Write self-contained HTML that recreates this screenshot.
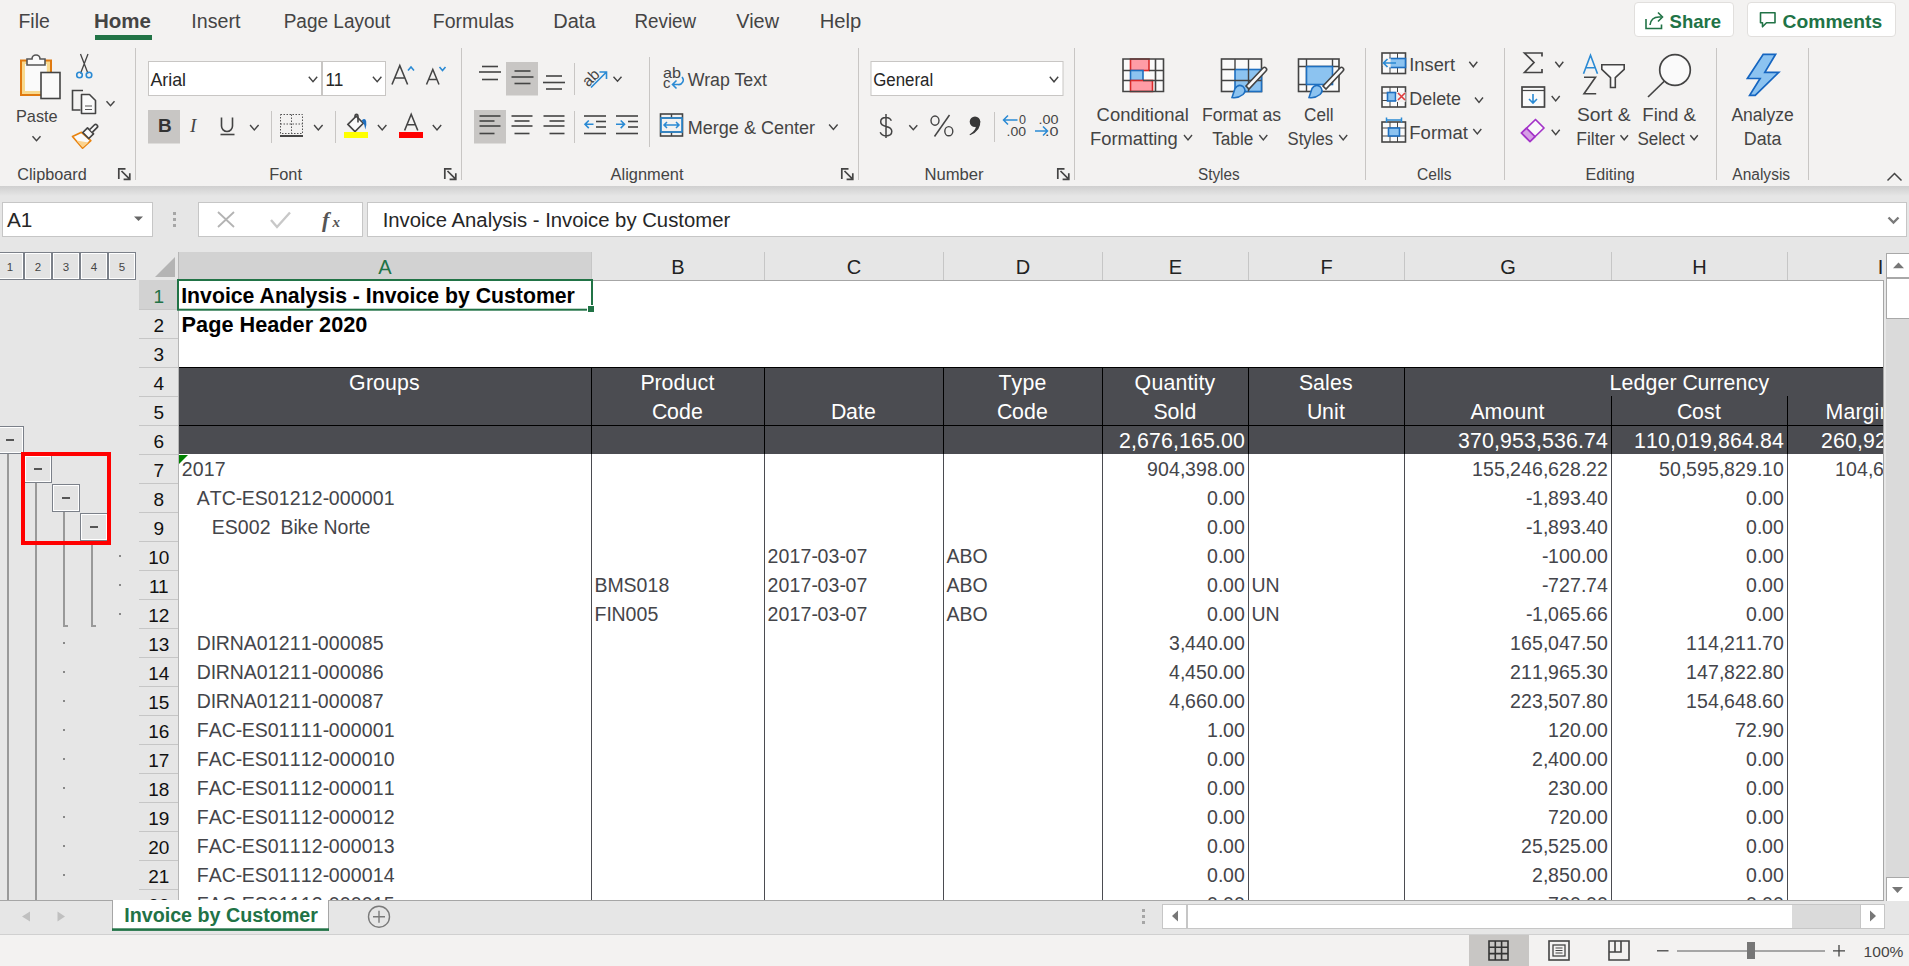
<!DOCTYPE html>
<html><head><meta charset="utf-8"><title>Excel - Invoice by Customer</title>
<style>
html,body{margin:0;padding:0;}
body{width:1909px;height:966px;overflow:hidden;position:relative;background:#e6e6e6;font-family:"Liberation Sans",sans-serif;}
.abs{position:absolute;}
svg{position:absolute;left:0;top:0;overflow:visible;}
svg text{font-family:"Liberation Sans",sans-serif;}
</style></head><body>
<div class="abs" style="left:0;top:0;width:1909px;height:186px;background:#f3f2f1"></div><div class="abs" style="left:0;top:186px;width:1909px;height:10px;background:linear-gradient(#cfcfcf,#e6e6e6)"></div><div class="abs" style="left:1634px;top:2px;width:98px;height:33px;background:#fff;border:1px solid #e1dfdd;border-radius:4px"></div><div class="abs" style="left:1747px;top:2px;width:147px;height:33px;background:#fff;border:1px solid #e1dfdd;border-radius:4px"></div><svg width="1909" height="196" viewBox="0 0 1909 196"><rect x="148.5" y="61.5" width="173" height="34" fill="#fff" stroke="#c8c6c4"/><rect x="322.5" y="61.5" width="63" height="34" fill="#fff" stroke="#c8c6c4"/><rect x="871" y="61.5" width="192" height="34" fill="#fff" stroke="#c8c6c4"/><text x="18.5" y="28" font-size="19.5" fill="#444" font-weight="normal" textLength="31.3" lengthAdjust="spacingAndGlyphs" >File</text><text x="94.0" y="28" font-size="19.5" fill="#444" font-weight="bold" textLength="57.0" lengthAdjust="spacingAndGlyphs" >Home</text><text x="191.3" y="28" font-size="19.5" fill="#444" font-weight="normal" textLength="49.1" lengthAdjust="spacingAndGlyphs" >Insert</text><text x="283.7" y="28" font-size="19.5" fill="#444" font-weight="normal" textLength="106.7" lengthAdjust="spacingAndGlyphs" >Page Layout</text><text x="432.8" y="28" font-size="19.5" fill="#444" font-weight="normal" textLength="81.2" lengthAdjust="spacingAndGlyphs" >Formulas</text><text x="553.3" y="28" font-size="19.5" fill="#444" font-weight="normal" textLength="42.2" lengthAdjust="spacingAndGlyphs" >Data</text><text x="634.5" y="28" font-size="19.5" fill="#444" font-weight="normal" textLength="61.6" lengthAdjust="spacingAndGlyphs" >Review</text><text x="736.3" y="28" font-size="19.5" fill="#444" font-weight="normal" textLength="42.7" lengthAdjust="spacingAndGlyphs" >View</text><text x="819.8" y="28" font-size="19.5" fill="#444" font-weight="normal" textLength="41.5" lengthAdjust="spacingAndGlyphs" >Help</text><rect x="95" y="35" width="57" height="5" fill="#217346"/><text x="1669.6" y="28" font-size="19" fill="#217346" font-weight="bold" textLength="51.4" lengthAdjust="spacingAndGlyphs" >Share</text><text x="1782.6" y="28" font-size="19" fill="#217346" font-weight="bold" textLength="99.5" lengthAdjust="spacingAndGlyphs" >Comments</text><path d="M1646 19 v9.5 h15.5 v-4" fill="none" stroke="#217346" stroke-width="1.6"/><path d="M1650 25 q1-8 9-8 h2.5" fill="none" stroke="#217346" stroke-width="1.6"/><path d="M1658 12.5 l4.5 4.5 -4.5 4.5" fill="none" stroke="#217346" stroke-width="1.6"/><path d="M1760.5 12.8 h14.5 v10 h-8.5 l-4 4 v-4 h-2 z" fill="none" stroke="#217346" stroke-width="1.6" stroke-linejoin="round"/><line x1="135.5" y1="48" x2="135.5" y2="180" stroke="#c8c6c4" stroke-width="1"/><line x1="461.5" y1="48" x2="461.5" y2="180" stroke="#c8c6c4" stroke-width="1"/><line x1="858.5" y1="48" x2="858.5" y2="180" stroke="#c8c6c4" stroke-width="1"/><line x1="1074.5" y1="48" x2="1074.5" y2="180" stroke="#c8c6c4" stroke-width="1"/><line x1="1365.5" y1="48" x2="1365.5" y2="180" stroke="#c8c6c4" stroke-width="1"/><line x1="1504.5" y1="48" x2="1504.5" y2="180" stroke="#c8c6c4" stroke-width="1"/><line x1="1716.5" y1="48" x2="1716.5" y2="180" stroke="#c8c6c4" stroke-width="1"/><line x1="1808.5" y1="48" x2="1808.5" y2="180" stroke="#c8c6c4" stroke-width="1"/><text x="17.3" y="179.5" font-size="16" fill="#444" font-weight="normal" textLength="69.4" lengthAdjust="spacingAndGlyphs" >Clipboard</text><text x="269.3" y="179.5" font-size="16" fill="#444" font-weight="normal" textLength="32.7" lengthAdjust="spacingAndGlyphs" >Font</text><text x="610.6" y="179.5" font-size="16" fill="#444" font-weight="normal" textLength="72.9" lengthAdjust="spacingAndGlyphs" >Alignment</text><text x="924.4" y="179.5" font-size="16" fill="#444" font-weight="normal" textLength="59.2" lengthAdjust="spacingAndGlyphs" >Number</text><text x="1198.0" y="179.5" font-size="16" fill="#444" font-weight="normal" textLength="41.6" lengthAdjust="spacingAndGlyphs" >Styles</text><text x="1417.0" y="179.5" font-size="16" fill="#444" font-weight="normal" textLength="34.6" lengthAdjust="spacingAndGlyphs" >Cells</text><text x="1585.6" y="179.5" font-size="16" fill="#444" font-weight="normal" textLength="49.2" lengthAdjust="spacingAndGlyphs" >Editing</text><text x="1732.3" y="179.5" font-size="16" fill="#444" font-weight="normal" textLength="57.8" lengthAdjust="spacingAndGlyphs" >Analysis</text><path d="M125.5 168.8 h-6.7 v10.2" fill="none" stroke="#444" stroke-width="1.7"/><path d="M121.5 171 l8.2 8.2 M129.8 173.2 v6.2 h-6.2" fill="none" stroke="#444" stroke-width="1.7"/><path d="M451.5 168.8 h-6.7 v10.2" fill="none" stroke="#444" stroke-width="1.7"/><path d="M447.5 171 l8.2 8.2 M455.8 173.2 v6.2 h-6.2" fill="none" stroke="#444" stroke-width="1.7"/><path d="M848.5 168.8 h-6.7 v10.2" fill="none" stroke="#444" stroke-width="1.7"/><path d="M844.5 171 l8.2 8.2 M852.8 173.2 v6.2 h-6.2" fill="none" stroke="#444" stroke-width="1.7"/><path d="M1064.5 168.8 h-6.7 v10.2" fill="none" stroke="#444" stroke-width="1.7"/><path d="M1060.5 171 l8.2 8.2 M1068.8 173.2 v6.2 h-6.2" fill="none" stroke="#444" stroke-width="1.7"/><path d="M1887.5 180.5 l7 -7 l7 7" fill="none" stroke="#444" stroke-width="1.5"/><rect x="21" y="60.5" width="30" height="34.5" fill="#f8d98e" stroke="#e07a10" stroke-width="2"/><rect x="25" y="64" width="21.8" height="27" fill="#fafafa"/><path d="M27 65 v-6 h5 a4 4 0 0 1 8 0 h5 v6 z" fill="#fafafa" stroke="#555" stroke-width="1.6"/><rect x="41" y="72.5" width="19" height="26" fill="#fafafa" stroke="#444" stroke-width="1.6"/><text x="16.0" y="121.5" font-size="17" fill="#444444" font-weight="normal" textLength="41.7" lengthAdjust="spacingAndGlyphs" >Paste</text><path d="M32.5 136.2 L36.5 140.8 L40.5 136.2" fill="none" stroke="#444" stroke-width="1.4"/><path d="M80.5 54 L88 73.5 M88 54 L80.5 73.5" stroke="#444" stroke-width="1.3"/><circle cx="79.5" cy="75" r="2.8" fill="none" stroke="#2a8ad4" stroke-width="1.6"/><circle cx="89" cy="75" r="2.8" fill="none" stroke="#2a8ad4" stroke-width="1.6"/><path d="M83 90.5 h-10.5 v19.5 h8" fill="none" stroke="#444" stroke-width="1.6"/><path d="M81.5 94.5 h8 l6 6 v13 h-14 z" fill="#fafafa" stroke="#444" stroke-width="1.6" stroke-linejoin="round"/><path d="M85 106 h7 M85 109.5 h7" stroke="#555" stroke-width="1.2"/><path d="M106.5 101.2 L110.5 105.8 L114.5 101.2" fill="none" stroke="#444" stroke-width="1.4"/><path d="M72.5 136.5 L81.5 132.3 L90.8 140.6 L82.6 148.2 Z" fill="#fafafa" stroke="#e8830f" stroke-width="1.7" stroke-linejoin="round"/><path d="M76.5 140.5 L82.6 147.5 L88.5 142.5 Z" fill="#fbd38f"/><path d="M82.8 132.5 L87.5 127.8 L93.5 133.8 L88.8 138.5 Z" fill="#fafafa" stroke="#444" stroke-width="1.7" stroke-linejoin="round"/><path d="M89.8 129.5 L94.3 125 a1.9 1.9 0 0 1 2.7 2.7 L92.5 132.2" fill="#fafafa" stroke="#444" stroke-width="1.7"/><path d="M308.8 76.7 L313.0 81.7 L317.2 76.7" fill="none" stroke="#444" stroke-width="1.4"/><path d="M372.9 76.7 L377.2 81.7 L381.4 76.7" fill="none" stroke="#444" stroke-width="1.4"/><text x="150.4" y="86" font-size="19" fill="#262626" font-weight="normal" textLength="35.6" lengthAdjust="spacingAndGlyphs" >Arial</text><text x="325.5" y="86" font-size="19" fill="#262626" font-weight="normal" textLength="17.9" lengthAdjust="spacingAndGlyphs" >11</text><path d="M392 84.5 L399.8 65.5 L407.6 84.5 M394.8 78 h10" fill="none" stroke="#444" stroke-width="1.6"/><path d="M408 70.5 l3 -3.5 l3 3.5" fill="none" stroke="#2a8ad4" stroke-width="1.6"/><path d="M426.5 84.5 L432.8 69.5 L439 84.5 M428.8 79.5 h8" fill="none" stroke="#444" stroke-width="1.5"/><path d="M439.5 67 l3 3.5 l3 -3.5" fill="none" stroke="#2a8ad4" stroke-width="1.6"/><rect x="148" y="110" width="32" height="33.5" fill="#c8c6c4"/><text x="158" y="131.5" font-size="19" font-weight="bold" fill="#333">B</text><text x="190" y="131.5" font-size="19" font-style="italic" fill="#444" style="font-family:Liberation Serif">I</text><path d="M221.5 117.5 v8.5 a5.5 5.5 0 0 0 11 0 v-8.5" fill="none" stroke="#444" stroke-width="1.6"/><path d="M220.5 134.5 h14" stroke="#444" stroke-width="1.6"/><path d="M250.1 125.0 L254.3 130.0 L258.6 125.0" fill="none" stroke="#444" stroke-width="1.4"/><line x1="271.5" y1="111" x2="271.5" y2="143" stroke="#c8c6c4"/><path d="M280.5 114.5 h22 v19 h-22 z M291.5 114.5 v19 M280.5 124 h22" fill="none" stroke="#555" stroke-width="1" stroke-dasharray="1.5 1.5"/><path d="M280 136 h23" stroke="#333" stroke-width="1.8"/><path d="M314.1 125.0 L318.3 130.0 L322.6 125.0" fill="none" stroke="#444" stroke-width="1.4"/><line x1="335.5" y1="111" x2="335.5" y2="143" stroke="#c8c6c4"/><path d="M347.9 124.4 L356.2 116.1 L363.3 123.2 L355 131.5 Z" fill="#fafafa" stroke="#444" stroke-width="1.6" stroke-linejoin="miter"/><path d="M355 117.6 V116.6 q0 -2.2 1.5 -2.2 q1.5 0 1.5 2.2 V122.6" fill="none" stroke="#444" stroke-width="1.6"/><path d="M361.8 120.2 q3.4 -2.6 4.4 1 q0.7 3.2 -0.9 8.3 q-0.4 -4.8 -3.5 -9.3 z" fill="#1e6fc0"/><rect x="344" y="132" width="24" height="6" fill="#ffff00"/><path d="M377.9 125.0 L382.2 130.0 L386.4 125.0" fill="none" stroke="#444" stroke-width="1.4"/><path d="M404.6 130.5 L411.2 114.3 L417.8 130.5 M406.9 124.8 h8.6" fill="none" stroke="#444" stroke-width="1.6"/><rect x="399" y="132" width="24" height="6" fill="#ff0000"/><path d="M432.8 125.0 L437.0 130.0 L441.2 125.0" fill="none" stroke="#444" stroke-width="1.4"/><rect x="506" y="62" width="32" height="33.5" fill="#c8c6c4"/><rect x="474" y="110" width="32" height="33.5" fill="#c8c6c4"/><path d="M482.0 66.5 h16" stroke="#444" stroke-width="1.6"/><path d="M479.0 72 h22" stroke="#444" stroke-width="1.6"/><path d="M482.0 79.5 h16" stroke="#444" stroke-width="1.6"/><path d="M514.5 71 h16" stroke="#444" stroke-width="1.6"/><path d="M511.5 77 h22" stroke="#444" stroke-width="1.6"/><path d="M514.5 83.5 h16" stroke="#444" stroke-width="1.6"/><path d="M546.0 76 h16" stroke="#444" stroke-width="1.6"/><path d="M543.0 82.5 h22" stroke="#444" stroke-width="1.6"/><path d="M546.0 89 h16" stroke="#444" stroke-width="1.6"/><path d="M479.5 116 h21" stroke="#444" stroke-width="1.6"/><path d="M479.5 121 h15" stroke="#444" stroke-width="1.6"/><path d="M479.5 126 h21" stroke="#444" stroke-width="1.6"/><path d="M479.5 133.5 h15" stroke="#444" stroke-width="1.6"/><path d="M511.5 116 h21" stroke="#444" stroke-width="1.6"/><path d="M514.5 121 h15" stroke="#444" stroke-width="1.6"/><path d="M511.5 126 h21" stroke="#444" stroke-width="1.6"/><path d="M514.5 133.5 h15" stroke="#444" stroke-width="1.6"/><path d="M543.5 116 h21" stroke="#444" stroke-width="1.6"/><path d="M549.5 121 h15" stroke="#444" stroke-width="1.6"/><path d="M543.5 126 h21" stroke="#444" stroke-width="1.6"/><path d="M549.5 133.5 h15" stroke="#444" stroke-width="1.6"/><line x1="574.5" y1="63" x2="574.5" y2="95" stroke="#c8c6c4"/><line x1="574.5" y1="111" x2="574.5" y2="143" stroke="#c8c6c4"/><line x1="649.5" y1="57" x2="649.5" y2="147" stroke="#c8c6c4"/><text x="581" y="84" font-size="15.5" fill="#444" transform="rotate(-45 589 77)">ab</text><path d="M591 87.5 L606 72.5 M599.5 72 h7 v7" fill="none" stroke="#2a8ad4" stroke-width="1.6"/><path d="M613.5 76.8 L617.5 81.2 L621.5 76.8" fill="none" stroke="#444" stroke-width="1.4"/><path d="M584.0 116 h22" stroke="#444" stroke-width="1.6"/><path d="M596.0 121.5 h10" stroke="#444" stroke-width="1.6"/><path d="M596.0 127 h10" stroke="#444" stroke-width="1.6"/><path d="M584.0 133.5 h22" stroke="#444" stroke-width="1.6"/><path d="M593.5 124.3 h-8.5 M588.8 120.5 l-3.8 3.8 l3.8 3.8" fill="none" stroke="#2a8ad4" stroke-width="1.6"/><path d="M616.0 116 h22" stroke="#444" stroke-width="1.6"/><path d="M628.0 121.5 h10" stroke="#444" stroke-width="1.6"/><path d="M628.0 127 h10" stroke="#444" stroke-width="1.6"/><path d="M616.0 133.5 h22" stroke="#444" stroke-width="1.6"/><path d="M616 124.3 h8.5 M620.7 120.5 l3.8 3.8 l-3.8 3.8" fill="none" stroke="#2a8ad4" stroke-width="1.6"/><text x="663" y="77.5" font-size="15" fill="#444" textLength="18" lengthAdjust="spacingAndGlyphs">ab</text><text x="663" y="88" font-size="15" fill="#444">c</text><path d="M673 84.5 h5 a4.5 4.5 0 0 0 4 -7.5 M676.5 80.5 l-4 4 l4 4" fill="none" stroke="#2a8ad4" stroke-width="1.6"/><text x="687.8" y="85.6" font-size="18" fill="#444444" font-weight="normal" textLength="79.2" lengthAdjust="spacingAndGlyphs" >Wrap Text</text><rect x="660.5" y="114" width="22" height="22" fill="none" stroke="#444" stroke-width="1.6"/><path d="M660.5 118 h22 M660.5 132 h22 M671.5 132 v4 M671.5 114 v4" stroke="#444" stroke-width="1.4"/><rect x="661" y="118" width="21" height="14" fill="none" stroke="#2a8ad4" stroke-width="1.6"/><path d="M664 125 h15 M667 122 l-3 3 l3 3 M676 122 l3 3 l-3 3" fill="none" stroke="#2a8ad4" stroke-width="1.5"/><text x="687.8" y="133.6" font-size="18" fill="#444444" font-weight="normal" textLength="127.2" lengthAdjust="spacingAndGlyphs" >Merge &amp; Center</text><path d="M829.1 124.5 L833.4 129.5 L837.6 124.5" fill="none" stroke="#444" stroke-width="1.4"/><text x="610.6" y="179.5" font-size="16" fill="#444444" font-weight="normal" textLength="72.9" lengthAdjust="spacingAndGlyphs" ></text><path d="M1049.8 76.8 L1054.0 81.8 L1058.2 76.8" fill="none" stroke="#444" stroke-width="1.4"/><text x="873.2" y="85.6" font-size="18" fill="#262626" font-weight="normal" textLength="60.0" lengthAdjust="spacingAndGlyphs" >General</text><path d="M891.3 120.8 q-1.2 -3.3 -5.3 -3.3 q-5.3 0 -5.3 4.3 q0 3.6 5.3 4.6 q5.8 1.1 5.8 4.9 q0 4.6 -5.8 4.6 q-4.3 0 -5.8 -3.6 M886 114 v24" fill="none" stroke="#444" stroke-width="1.5"/><path d="M909.3 125.2 L913.3 129.8 L917.3 125.2" fill="none" stroke="#444" stroke-width="1.4"/><ellipse cx="935" cy="120.6" rx="4" ry="4.6" fill="none" stroke="#444" stroke-width="1.4"/><ellipse cx="948.8" cy="131.2" rx="4" ry="4.6" fill="none" stroke="#444" stroke-width="1.4"/><path d="M949.5 115 L934.5 136.5" stroke="#444" stroke-width="1.5"/><circle cx="975" cy="121.8" r="5.3" fill="#383838"/><path d="M980.2 121 q1.2 9.5 -10.2 14.3 l-0.5 -0.8 q6.5 -4 6.5 -9 z" fill="#383838"/><line x1="994.5" y1="112" x2="994.5" y2="142" stroke="#c8c6c4"/><text x="1019" y="124.3" font-size="13" fill="#444" textLength="7" lengthAdjust="spacingAndGlyphs">0</text><text x="1006.5" y="136" font-size="13" fill="#444" textLength="19.5" lengthAdjust="spacingAndGlyphs">.00</text><path d="M1017.5 120 h-13 M1008 115.5 l-4.5 4.5 l4.5 4.5" fill="none" stroke="#2a8ad4" stroke-width="1.5"/><text x="1038.5" y="124.3" font-size="13" fill="#444" textLength="20" lengthAdjust="spacingAndGlyphs">.00</text><text x="1045" y="136" font-size="13" fill="#444" textLength="13.5" lengthAdjust="spacingAndGlyphs">.0</text><path d="M1035 131 h12.5 M1043 126.5 l4.5 4.5 l-4.5 4.5" fill="none" stroke="#2a8ad4" stroke-width="1.5"/><rect x="1123" y="59.5" width="40.5" height="31.5" fill="#fafafa"/><rect x="1130.5" y="59" width="18.5" height="11.5" fill="#ff9ca6" stroke="#d92b2b" stroke-width="1.6"/><rect x="1130.5" y="70.5" width="12.5" height="10" fill="#8cc3f0" stroke="#1e6fc0" stroke-width="1.6"/><rect x="1130.5" y="80.5" width="22" height="11" fill="#ff9ca6" stroke="#d92b2b" stroke-width="1.6"/><path d="M1123 59 h40.5 v32.5 h-40.5 z M1123 70.5 h7.5 M1149 70.5 h14.5 M1123 80.5 h7.5 M1143 80.5 h20.5 M1155.5 59 v32.5 M1149 59 v0" fill="none" stroke="#444" stroke-width="1.6"/><text x="1096.6" y="121.2" font-size="18" fill="#444444" font-weight="normal" textLength="92.2" lengthAdjust="spacingAndGlyphs" >Conditional</text><text x="1090.0" y="145.2" font-size="18" fill="#444444" font-weight="normal" textLength="87.8" lengthAdjust="spacingAndGlyphs" >Formatting</text><path d="M1184.0 135.0 L1188.0 140.0 L1192.0 135.0" fill="none" stroke="#444" stroke-width="1.4"/><rect x="1221.5" y="59" width="40" height="32.5" fill="#fafafa" stroke="#444" stroke-width="1.6"/><rect x="1235" y="69.5" width="26.5" height="22" fill="#8cc3f0" stroke="#1e6fc0" stroke-width="1.6"/><path d="M1221.5 69.5 h13.5 M1221.5 80.5 h13.5 M1235 59 v10.5 M1248.5 59 v10.5 M1235 80.5 h26.5 M1248.5 69.5 v22" fill="none" stroke="#444" stroke-width="1.4"/><path d="M1246 86 l17 -18 a2 2 0 0 1 3 3 l-17 18 z" fill="#fafafa" stroke="#444" stroke-width="1.6"/><path d="M1232 97.5 q6 1 11 -3 q4 -4 0 -8 q-5 -3 -8 2 q-2 6 -3 9 z" fill="#8cc3f0" stroke="#1e6fc0" stroke-width="1.6"/><text x="1201.9" y="121.2" font-size="18" fill="#444444" font-weight="normal" textLength="79.3" lengthAdjust="spacingAndGlyphs" >Format as</text><text x="1212.2" y="145.2" font-size="18" fill="#444444" font-weight="normal" textLength="41.1" lengthAdjust="spacingAndGlyphs" >Table</text><path d="M1259.3 135.0 L1263.3 140.0 L1267.3 135.0" fill="none" stroke="#444" stroke-width="1.4"/><rect x="1298.5" y="59" width="40.5" height="32.5" fill="#fafafa" stroke="#444" stroke-width="1.6"/><path d="M1298.5 66.5 h40.5 M1298.5 84.5 h8 M1306.5 59 v32.5 M1332.5 59 v8" fill="none" stroke="#444" stroke-width="1.4"/><rect x="1306.5" y="66.5" width="26" height="18" fill="#8cc3f0" stroke="#1e6fc0" stroke-width="1.6"/><path d="M1323 86 l17 -18 a2 2 0 0 1 3 3 l-17 18 z" fill="#fafafa" stroke="#444" stroke-width="1.6"/><path d="M1309 97.5 q6 1 11 -3 q4 -4 0 -8 q-5 -3 -8 2 q-2 6 -3 9 z" fill="#8cc3f0" stroke="#1e6fc0" stroke-width="1.6"/><text x="1304.1" y="121.2" font-size="18" fill="#444444" font-weight="normal" textLength="29.5" lengthAdjust="spacingAndGlyphs" >Cell</text><text x="1287.6" y="145.2" font-size="18" fill="#444444" font-weight="normal" textLength="45.4" lengthAdjust="spacingAndGlyphs" >Styles</text><path d="M1339.2 135.0 L1343.2 140.0 L1347.2 135.0" fill="none" stroke="#444" stroke-width="1.4"/><rect x="1382" y="53" width="23.5" height="20.5" fill="#fafafa" stroke="#444" stroke-width="1.6"/><path d="M1382 60 h23.5 M1382 66.5 h23.5 M1390 53 v20.5 M1397.5 53 v20.5" stroke="#444" stroke-width="1"/><rect x="1390" y="58.5" width="15.5" height="9" fill="#8cc3f0" stroke="#1e6fc0" stroke-width="1.6"/><rect x="1382.8" y="58.5" width="8" height="9" fill="#f3f2f1"/><path d="M1396 63 h-12.5 M1387.5 59 l-4 4 l4 4" fill="none" stroke="#2a8ad4" stroke-width="1.7"/><text x="1409.3" y="71.3" font-size="18" fill="#444444" font-weight="normal" textLength="45.7" lengthAdjust="spacingAndGlyphs" >Insert</text><path d="M1469.3 61.8 L1473.3 66.8 L1477.3 61.8" fill="none" stroke="#444" stroke-width="1.4"/><rect x="1382" y="87" width="23.5" height="20" fill="#fafafa" stroke="#444" stroke-width="1.6"/><path d="M1382 93 h23.5 M1382 100.5 h23.5 M1390 87 v20 M1397.5 87 v20" stroke="#444" stroke-width="1"/><rect x="1387.5" y="92.5" width="8" height="8.5" fill="#8cc3f0" stroke="#1e6fc0" stroke-width="1.6"/><rect x="1396.5" y="92" width="9" height="10" fill="#f3f2f1"/><path d="M1398 93 l7 7 M1405 93 l-7 7" stroke="#e03b3b" stroke-width="1.6"/><text x="1409.3" y="105" font-size="18" fill="#444444" font-weight="normal" textLength="51.7" lengthAdjust="spacingAndGlyphs" >Delete</text><path d="M1475.0 97.5 L1479.0 102.5 L1483.0 97.5" fill="none" stroke="#444" stroke-width="1.4"/><rect x="1382" y="122" width="23.5" height="20" fill="#fafafa" stroke="#444" stroke-width="1.6"/><path d="M1382 128 h23.5 M1382 136 h23.5 M1390 122 v20 M1397.5 122 v20" stroke="#444" stroke-width="1"/><rect x="1388.5" y="128" width="11" height="8" fill="#8cc3f0" stroke="#1e6fc0" stroke-width="1.6"/><path d="M1386.5 120 h15 M1386.5 117.5 v5 M1401.5 117.5 v5" stroke="#2a8ad4" stroke-width="1.5"/><text x="1409.3" y="139" font-size="18" fill="#444444" font-weight="normal" textLength="58.7" lengthAdjust="spacingAndGlyphs" >Format</text><path d="M1473.3 129.0 L1477.3 134.0 L1481.3 129.0" fill="none" stroke="#444" stroke-width="1.4"/><path d="M1542 56.5 v-3.5 h-17.5 l9.5 9.5 l-9.5 10 h17.5 v-3.5" fill="none" stroke="#444" stroke-width="1.7"/><path d="M1555.3 61.8 L1559.3 66.8 L1563.3 61.8" fill="none" stroke="#444" stroke-width="1.4"/><rect x="1522" y="87" width="22.5" height="20" fill="#fafafa" stroke="#444" stroke-width="1.7"/><path d="M1522 90.5 h22.5" stroke="#444" stroke-width="1.2"/><path d="M1533 94 v9 M1529 99 l4 4 l4 -4" fill="none" stroke="#2a8ad4" stroke-width="1.6"/><path d="M1551.7 96.0 L1555.7 101.0 L1559.7 96.0" fill="none" stroke="#444" stroke-width="1.4"/><path d="M1521.5 133 L1535.5 119.5 L1544 128 L1530 141.5 z" fill="#fafafa" stroke="#a333c8" stroke-width="1.7" stroke-linejoin="round"/><path d="M1521.5 133 L1526.5 128.2 L1535 136.7 L1530 141.5 z" fill="#d69ee6" stroke="#a333c8" stroke-width="1.7" stroke-linejoin="round"/><path d="M1551.7 129.7 L1555.7 134.7 L1559.7 129.7" fill="none" stroke="#444" stroke-width="1.4"/><path d="M1583.5 73.8 L1590.5 55.3 L1597.5 73.8 M1586 67.8 h9" fill="none" stroke="#2a8ad4" stroke-width="1.6"/><path d="M1584 77.3 h11.5 L1584 93.8 h12.2" fill="none" stroke="#444" stroke-width="1.6"/><path d="M1601.8 64.8 H1624.2 V69.4 L1615.3 77.6 V87.5 H1610.5 V77.6 L1601.8 69.4 Z" fill="#fafafa" stroke="#444" stroke-width="1.6" stroke-linejoin="miter"/><text x="1577.0" y="120.7" font-size="18" fill="#444444" font-weight="normal" textLength="53.5" lengthAdjust="spacingAndGlyphs" >Sort &amp;</text><text x="1576.3" y="144.6" font-size="18" fill="#444444" font-weight="normal" textLength="38.7" lengthAdjust="spacingAndGlyphs" >Filter</text><path d="M1620.5 135.2 L1624.2 139.8 L1628.0 135.2" fill="none" stroke="#444" stroke-width="1.4"/><circle cx="1675" cy="70" r="15.3" fill="#fafafa" stroke="#444" stroke-width="1.7"/><path d="M1664.5 81 L1648 97" stroke="#444" stroke-width="1.7"/><text x="1642.3" y="120.7" font-size="18" fill="#444444" font-weight="normal" textLength="53.7" lengthAdjust="spacingAndGlyphs" >Find &amp;</text><text x="1637.5" y="144.6" font-size="18" fill="#444444" font-weight="normal" textLength="47.3" lengthAdjust="spacingAndGlyphs" >Select</text><path d="M1690.3 135.2 L1694.1 139.8 L1697.8 135.2" fill="none" stroke="#444" stroke-width="1.4"/><path d="M1763.2 54.3 H1775.6 L1764.8 72.3 H1778.8 L1755.2 95.3 H1749.6 L1760.1 78.5 H1747.4 Z" fill="#8cc3f0" stroke="#1565c0" stroke-width="1.7" stroke-linejoin="miter"/><text x="1731.4" y="120.7" font-size="18" fill="#444444" font-weight="normal" textLength="62.4" lengthAdjust="spacingAndGlyphs" >Analyze</text><text x="1743.8" y="144.6" font-size="18" fill="#444444" font-weight="normal" textLength="37.7" lengthAdjust="spacingAndGlyphs" >Data</text></svg><div class="abs" style="left:2px;top:202px;width:149px;height:33px;background:#fff;border:1px solid #c6c6c6"></div><div class="abs" style="left:198px;top:202px;width:163px;height:33px;background:#fff;border:1px solid #c6c6c6"></div><div class="abs" style="left:367px;top:202px;width:1538px;height:33px;background:#fff;border:1px solid #c6c6c6"></div><div class="abs" style="left:179px;top:280px;width:1704px;height:620px;background:#fff"></div><svg width="1909" height="966"><text x="7.0" y="227" font-size="19.5" fill="#262626" font-weight="normal" textLength="25.4" lengthAdjust="spacingAndGlyphs" >A1</text><path d="M134 216.5 h9 l-4.5 4.5 z" fill="#666"/><rect x="173" y="212" width="3" height="3" fill="#a6a6a6"/><rect x="173" y="218" width="3" height="3" fill="#a6a6a6"/><rect x="173" y="224" width="3" height="3" fill="#a6a6a6"/><path d="M218 212 L234 227 M234 212 L218 227" stroke="#b3b3b3" stroke-width="1.8"/><path d="M271 220 L277 227 L290 212.5" fill="none" stroke="#c8c8c8" stroke-width="2.4"/><text x="322" y="226.5" font-size="22" font-style="italic" font-weight="bold" style="font-family:Liberation Serif" fill="#555">f</text><text x="332.5" y="226.5" font-size="15" font-style="italic" font-weight="bold" style="font-family:Liberation Serif" fill="#555">x</text><text x="382.7" y="227" font-size="20" fill="#262626" font-weight="normal" textLength="347.5" lengthAdjust="spacingAndGlyphs" >Invoice Analysis - Invoice by Customer</text><path d="M1888.5 217.5 l5 5 l5 -5" fill="none" stroke="#7a7a7a" stroke-width="2.4"/><rect x="-3.5" y="252.5" width="27" height="27" fill="#e3e3e3" stroke="#7b8089"/><rect x="-2.5" y="253.5" width="25" height="25" fill="none" stroke="#fff"/><text x="10" y="271" font-size="11.5" fill="#444" text-anchor="middle">1</text><rect x="24.5" y="252.5" width="27" height="27" fill="#e3e3e3" stroke="#7b8089"/><rect x="25.5" y="253.5" width="25" height="25" fill="none" stroke="#fff"/><text x="38" y="271" font-size="11.5" fill="#444" text-anchor="middle">2</text><rect x="52.5" y="252.5" width="27" height="27" fill="#e3e3e3" stroke="#7b8089"/><rect x="53.5" y="253.5" width="25" height="25" fill="none" stroke="#fff"/><text x="66" y="271" font-size="11.5" fill="#444" text-anchor="middle">3</text><rect x="80.5" y="252.5" width="27" height="27" fill="#e3e3e3" stroke="#7b8089"/><rect x="81.5" y="253.5" width="25" height="25" fill="none" stroke="#fff"/><text x="94" y="271" font-size="11.5" fill="#444" text-anchor="middle">4</text><rect x="108.5" y="252.5" width="27" height="27" fill="#e3e3e3" stroke="#7b8089"/><rect x="109.5" y="253.5" width="25" height="25" fill="none" stroke="#fff"/><text x="122" y="271" font-size="11.5" fill="#444" text-anchor="middle">5</text><rect x="7" y="453" width="2" height="447" fill="#999"/><rect x="35" y="482" width="2" height="418" fill="#999"/><rect x="63" y="511" width="2" height="116" fill="#999"/><rect x="63" y="625" width="5" height="2" fill="#999"/><rect x="91" y="540" width="2" height="87" fill="#999"/><rect x="91" y="625" width="5" height="2" fill="#999"/><rect x="-3.5" y="426.5" width="27" height="27" fill="#e3e3e3" stroke="#7b8089"/><rect x="-2.5" y="427.5" width="25" height="25" fill="none" stroke="#fff"/><rect x="6" y="439" width="8" height="2" fill="#555"/><rect x="24.5" y="455.5" width="27" height="27" fill="#e3e3e3" stroke="#7b8089"/><rect x="25.5" y="456.5" width="25" height="25" fill="none" stroke="#fff"/><rect x="34" y="468" width="8" height="2" fill="#555"/><rect x="52.5" y="484.5" width="27" height="27" fill="#e3e3e3" stroke="#7b8089"/><rect x="53.5" y="485.5" width="25" height="25" fill="none" stroke="#fff"/><rect x="62" y="497" width="8" height="2" fill="#555"/><rect x="80.5" y="513.5" width="27" height="27" fill="#e3e3e3" stroke="#7b8089"/><rect x="81.5" y="514.5" width="25" height="25" fill="none" stroke="#fff"/><rect x="90" y="526" width="8" height="2" fill="#555"/><rect x="119" y="555" width="2" height="2" fill="#888"/><rect x="119" y="584" width="2" height="2" fill="#888"/><rect x="119" y="613" width="2" height="2" fill="#888"/><rect x="63" y="642" width="2" height="2" fill="#888"/><rect x="63" y="671" width="2" height="2" fill="#888"/><rect x="63" y="700" width="2" height="2" fill="#888"/><rect x="63" y="729" width="2" height="2" fill="#888"/><rect x="63" y="758" width="2" height="2" fill="#888"/><rect x="63" y="787" width="2" height="2" fill="#888"/><rect x="63" y="816" width="2" height="2" fill="#888"/><rect x="63" y="845" width="2" height="2" fill="#888"/><rect x="63" y="874" width="2" height="2" fill="#888"/><rect x="63" y="903" width="2" height="2" fill="#888"/><rect x="23" y="454" width="86" height="89" fill="none" stroke="#ff0000" stroke-width="4"/><rect x="178" y="252" width="1705" height="28" fill="#e6e6e6"/><rect x="179" y="252" width="412" height="28" fill="#d2d2d2"/><rect x="591" y="252" width="1" height="28" fill="#c6c6c6"/><rect x="764" y="252" width="1" height="28" fill="#c6c6c6"/><rect x="943" y="252" width="1" height="28" fill="#c6c6c6"/><rect x="1102" y="252" width="1" height="28" fill="#c6c6c6"/><rect x="1248" y="252" width="1" height="28" fill="#c6c6c6"/><rect x="1404" y="252" width="1" height="28" fill="#c6c6c6"/><rect x="1611" y="252" width="1" height="28" fill="#c6c6c6"/><rect x="1787" y="252" width="1" height="28" fill="#c6c6c6"/><rect x="139" y="280" width="1744" height="1" fill="#a6a6a6"/><text x="385.0" y="274" font-size="20" fill="#217346" text-anchor="middle">A</text><text x="678.0" y="274" font-size="20" fill="#222" text-anchor="middle">B</text><text x="854.0" y="274" font-size="20" fill="#222" text-anchor="middle">C</text><text x="1023.0" y="274" font-size="20" fill="#222" text-anchor="middle">D</text><text x="1175.5" y="274" font-size="20" fill="#222" text-anchor="middle">E</text><text x="1326.5" y="274" font-size="20" fill="#222" text-anchor="middle">F</text><text x="1508.0" y="274" font-size="20" fill="#222" text-anchor="middle">G</text><text x="1699.5" y="274" font-size="20" fill="#222" text-anchor="middle">H</text><text x="1880.5" y="274" font-size="20" fill="#222" text-anchor="middle">I</text><path d="M155 277 L175 277 L175 257 z" fill="#b4b4b4"/><rect x="139" y="280" width="39" height="29" fill="#d2d2d2"/><rect x="178" y="252" width="1" height="648" fill="#b6b6b6"/><rect x="139" y="309" width="39" height="1" fill="#c6c6c6"/><text x="158.8" y="303" font-size="19" fill="#217346" text-anchor="middle">1</text><rect x="139" y="338" width="39" height="1" fill="#c6c6c6"/><text x="158.8" y="332" font-size="19" fill="#111" text-anchor="middle">2</text><rect x="139" y="367" width="39" height="1" fill="#c6c6c6"/><text x="158.8" y="361" font-size="19" fill="#111" text-anchor="middle">3</text><rect x="139" y="396" width="39" height="1" fill="#c6c6c6"/><text x="158.8" y="390" font-size="19" fill="#111" text-anchor="middle">4</text><rect x="139" y="425" width="39" height="1" fill="#c6c6c6"/><text x="158.8" y="419" font-size="19" fill="#111" text-anchor="middle">5</text><rect x="139" y="454" width="39" height="1" fill="#c6c6c6"/><text x="158.8" y="448" font-size="19" fill="#111" text-anchor="middle">6</text><rect x="139" y="483" width="39" height="1" fill="#c6c6c6"/><text x="158.8" y="477" font-size="19" fill="#111" text-anchor="middle">7</text><rect x="139" y="512" width="39" height="1" fill="#c6c6c6"/><text x="158.8" y="506" font-size="19" fill="#111" text-anchor="middle">8</text><rect x="139" y="541" width="39" height="1" fill="#c6c6c6"/><text x="158.8" y="535" font-size="19" fill="#111" text-anchor="middle">9</text><rect x="139" y="570" width="39" height="1" fill="#c6c6c6"/><text x="158.8" y="564" font-size="19" fill="#111" text-anchor="middle">10</text><rect x="139" y="599" width="39" height="1" fill="#c6c6c6"/><text x="158.8" y="593" font-size="19" fill="#111" text-anchor="middle">11</text><rect x="139" y="628" width="39" height="1" fill="#c6c6c6"/><text x="158.8" y="622" font-size="19" fill="#111" text-anchor="middle">12</text><rect x="139" y="657" width="39" height="1" fill="#c6c6c6"/><text x="158.8" y="651" font-size="19" fill="#111" text-anchor="middle">13</text><rect x="139" y="686" width="39" height="1" fill="#c6c6c6"/><text x="158.8" y="680" font-size="19" fill="#111" text-anchor="middle">14</text><rect x="139" y="715" width="39" height="1" fill="#c6c6c6"/><text x="158.8" y="709" font-size="19" fill="#111" text-anchor="middle">15</text><rect x="139" y="744" width="39" height="1" fill="#c6c6c6"/><text x="158.8" y="738" font-size="19" fill="#111" text-anchor="middle">16</text><rect x="139" y="773" width="39" height="1" fill="#c6c6c6"/><text x="158.8" y="767" font-size="19" fill="#111" text-anchor="middle">17</text><rect x="139" y="802" width="39" height="1" fill="#c6c6c6"/><text x="158.8" y="796" font-size="19" fill="#111" text-anchor="middle">18</text><rect x="139" y="831" width="39" height="1" fill="#c6c6c6"/><text x="158.8" y="825" font-size="19" fill="#111" text-anchor="middle">19</text><rect x="139" y="860" width="39" height="1" fill="#c6c6c6"/><text x="158.8" y="854" font-size="19" fill="#111" text-anchor="middle">20</text><rect x="139" y="889" width="39" height="1" fill="#c6c6c6"/><text x="158.8" y="883" font-size="19" fill="#111" text-anchor="middle">21</text><rect x="139" y="918" width="39" height="1" fill="#c6c6c6"/><text x="158.8" y="912" font-size="19" fill="#111" text-anchor="middle">22</text></svg><svg width="1909" height="966" style="clip-path:inset(280px 26px 66px 179px)"><rect x="179" y="367" width="1704" height="87" fill="#4b4c51"/><rect x="179" y="367" width="1704" height="1" fill="#000"/><rect x="179" y="425" width="1704" height="1" fill="#000"/><rect x="591" y="367" width="1" height="87" fill="#000"/><rect x="591" y="454" width="1" height="446" fill="#4b4c51"/><rect x="764" y="367" width="1" height="87" fill="#000"/><rect x="764" y="454" width="1" height="446" fill="#4b4c51"/><rect x="943" y="367" width="1" height="87" fill="#000"/><rect x="943" y="454" width="1" height="446" fill="#4b4c51"/><rect x="1102" y="367" width="1" height="87" fill="#000"/><rect x="1102" y="454" width="1" height="446" fill="#4b4c51"/><rect x="1248" y="367" width="1" height="87" fill="#000"/><rect x="1248" y="454" width="1" height="446" fill="#4b4c51"/><rect x="1404" y="367" width="1" height="87" fill="#000"/><rect x="1404" y="454" width="1" height="446" fill="#4b4c51"/><rect x="1611" y="396" width="1" height="58" fill="#000"/><rect x="1611" y="454" width="1" height="446" fill="#4b4c51"/><rect x="1787" y="396" width="1" height="58" fill="#000"/><rect x="1787" y="454" width="1" height="446" fill="#4b4c51"/><text x="181.2" y="303" font-size="21.3" fill="#000" font-weight="bold" textLength="393.7" lengthAdjust="spacingAndGlyphs" >Invoice Analysis - Invoice by Customer</text><text x="181.6" y="332" font-size="21.3" fill="#000" font-weight="bold" textLength="185.8" lengthAdjust="spacingAndGlyphs" >Page Header 2020</text><text x="349.0 366.0 373.0 385.0 397.0 409.0" y="389.5" font-size="21.3" fill="#fff" font-weight="normal">Groups</text><text x="640.5 654.5 661.5 673.5 685.5 697.5 708.5" y="389.5" font-size="21.3" fill="#fff" font-weight="normal">Product</text><text x="998.5 1011.5 1022.5 1034.5" y="389.5" font-size="21.3" fill="#fff" font-weight="normal">Type</text><text x="1134.5 1151.5 1163.5 1175.5 1187.5 1193.5 1198.5 1204.5" y="389.5" font-size="21.3" fill="#fff" font-weight="normal">Quantity</text><text x="1299.0 1313.0 1325.0 1330.0 1342.0" y="389.5" font-size="21.3" fill="#fff" font-weight="normal">Sales</text><text x="1609.5 1621.5 1633.5 1645.5 1657.5 1669.5 1676.5 1682.5 1697.5 1709.5 1716.5 1723.5 1735.5 1747.5 1758.5" y="389.5" font-size="21.3" fill="#fff" font-weight="normal">Ledger Currency</text><text x="652.0 667.0 679.0 691.0" y="418.5" font-size="21.3" fill="#fff" font-weight="normal">Code</text><text x="831.0 846.0 858.0 864.0" y="418.5" font-size="21.3" fill="#fff" font-weight="normal">Date</text><text x="997.0 1012.0 1024.0 1036.0" y="418.5" font-size="21.3" fill="#fff" font-weight="normal">Code</text><text x="1153.5 1167.5 1179.5 1184.5" y="418.5" font-size="21.3" fill="#fff" font-weight="normal">Sold</text><text x="1307.0 1322.0 1334.0 1339.0" y="418.5" font-size="21.3" fill="#fff" font-weight="normal">Unit</text><text x="1470.5 1484.5 1502.5 1514.5 1526.5 1538.5" y="418.5" font-size="21.3" fill="#fff" font-weight="normal">Amount</text><text x="1677.0 1692.0 1704.0 1715.0" y="418.5" font-size="21.3" fill="#fff" font-weight="normal">Cost</text><text x="1825.5 1843.5 1855.5 1862.5 1874.5 1879.5 1891.5 1897.5" y="418.5" font-size="21.3" fill="#fff" font-weight="normal">Margin %</text><text x="1119 1131 1137 1149 1161 1173 1179 1191 1203 1215 1221 1233" y="447.5" font-size="21.3" fill="#fff" font-weight="normal">2,676,165.00</text><text x="1458 1470 1482 1494 1500 1512 1524 1536 1542 1554 1566 1578 1584 1596" y="447.5" font-size="21.3" fill="#fff" font-weight="normal">370,953,536.74</text><text x="1634 1646 1658 1670 1676 1688 1700 1712 1718 1730 1742 1754 1760 1772" y="447.5" font-size="21.3" fill="#fff" font-weight="normal">110,019,864.84</text><text x="1821 1833 1845 1857 1863 1875 1887 1899 1905 1917 1929 1941 1947 1959" y="447.5" font-size="21.3" fill="#fff" font-weight="normal">260,928,671.90</text><text x="181.8 192.8 203.8 214.8" y="476" font-size="19.5" fill="#44454a" font-weight="normal">2017</text><text x="1147 1158 1169 1180 1185 1196 1207 1218 1223 1234" y="476" font-size="19.5" fill="#44454a" font-weight="normal">904,398.00</text><text x="1472 1483 1494 1505 1510 1521 1532 1543 1548 1559 1570 1581 1586 1597" y="476" font-size="19.5" fill="#44454a" font-weight="normal">155,246,628.22</text><text x="1659 1670 1681 1686 1697 1708 1719 1724 1735 1746 1757 1762 1773" y="476" font-size="19.5" fill="#44454a" font-weight="normal">50,595,829.10</text><text x="1835 1846 1857 1868 1873 1884 1895 1906 1911 1922 1933 1944 1949 1960" y="476" font-size="19.5" fill="#44454a" font-weight="normal">104,650,799.12</text><text x="196.7 209.7 221.7 235.7 241.7 254.7 267.7 278.7 289.7 300.7 311.7 322.7 328.7 339.7 350.7 361.7 372.7 383.7" y="505" font-size="19.5" fill="#44454a" font-weight="normal">ATC-ES01212-000001</text><text x="1207 1218 1223 1234" y="505" font-size="19.5" fill="#44454a" font-weight="normal">0.00</text><text x="1526 1532 1543 1548 1559 1570 1581 1586 1597" y="505" font-size="19.5" fill="#44454a" font-weight="normal">-1,893.40</text><text x="1746 1757 1762 1773" y="505" font-size="19.5" fill="#44454a" font-weight="normal">0.00</text><text x="211.7 224.7 237.7 248.7 259.7" y="534" font-size="19.5" fill="#44454a" font-weight="normal">ES002</text><text x="280.6 293.6 297.6 307.6 318.6 323.6 337.6 348.6 354.6 359.6" y="534" font-size="19.5" fill="#44454a" font-weight="normal">Bike Norte</text><text x="1207 1218 1223 1234" y="534" font-size="19.5" fill="#44454a" font-weight="normal">0.00</text><text x="1526 1532 1543 1548 1559 1570 1581 1586 1597" y="534" font-size="19.5" fill="#44454a" font-weight="normal">-1,893.40</text><text x="1746 1757 1762 1773" y="534" font-size="19.5" fill="#44454a" font-weight="normal">0.00</text><text x="767.5 778.5 789.5 800.5 811.5 817.5 828.5 839.5 845.5 856.5" y="563" font-size="19.5" fill="#44454a" font-weight="normal">2017-03-07</text><text x="946.5 959.5 972.5" y="563" font-size="19.5" fill="#44454a" font-weight="normal">ABO</text><text x="1207 1218 1223 1234" y="563" font-size="19.5" fill="#44454a" font-weight="normal">0.00</text><text x="1542 1548 1559 1570 1581 1586 1597" y="563" font-size="19.5" fill="#44454a" font-weight="normal">-100.00</text><text x="1746 1757 1762 1773" y="563" font-size="19.5" fill="#44454a" font-weight="normal">0.00</text><text x="594.5 607.5 623.5 636.5 647.5 658.5" y="592" font-size="19.5" fill="#44454a" font-weight="normal">BMS018</text><text x="767.5 778.5 789.5 800.5 811.5 817.5 828.5 839.5 845.5 856.5" y="592" font-size="19.5" fill="#44454a" font-weight="normal">2017-03-07</text><text x="946.5 959.5 972.5" y="592" font-size="19.5" fill="#44454a" font-weight="normal">ABO</text><text x="1207 1218 1223 1234" y="592" font-size="19.5" fill="#44454a" font-weight="normal">0.00</text><text x="1251.5 1265.5" y="592" font-size="19.5" fill="#44454a" font-weight="normal">UN</text><text x="1542 1548 1559 1570 1581 1586 1597" y="592" font-size="19.5" fill="#44454a" font-weight="normal">-727.74</text><text x="1746 1757 1762 1773" y="592" font-size="19.5" fill="#44454a" font-weight="normal">0.00</text><text x="594.5 606.5 611.5 625.5 636.5 647.5" y="621" font-size="19.5" fill="#44454a" font-weight="normal">FIN005</text><text x="767.5 778.5 789.5 800.5 811.5 817.5 828.5 839.5 845.5 856.5" y="621" font-size="19.5" fill="#44454a" font-weight="normal">2017-03-07</text><text x="946.5 959.5 972.5" y="621" font-size="19.5" fill="#44454a" font-weight="normal">ABO</text><text x="1207 1218 1223 1234" y="621" font-size="19.5" fill="#44454a" font-weight="normal">0.00</text><text x="1251.5 1265.5" y="621" font-size="19.5" fill="#44454a" font-weight="normal">UN</text><text x="1526 1532 1543 1548 1559 1570 1581 1586 1597" y="621" font-size="19.5" fill="#44454a" font-weight="normal">-1,065.66</text><text x="1746 1757 1762 1773" y="621" font-size="19.5" fill="#44454a" font-weight="normal">0.00</text><text x="196.7 210.7 215.7 229.7 243.7 256.7 267.7 278.7 289.7 300.7 311.7 317.7 328.7 339.7 350.7 361.7 372.7" y="650" font-size="19.5" fill="#44454a" font-weight="normal">DIRNA01211-000085</text><text x="1169 1180 1185 1196 1207 1218 1223 1234" y="650" font-size="19.5" fill="#44454a" font-weight="normal">3,440.00</text><text x="1510 1521 1532 1543 1548 1559 1570 1581 1586 1597" y="650" font-size="19.5" fill="#44454a" font-weight="normal">165,047.50</text><text x="1686 1697 1708 1719 1724 1735 1746 1757 1762 1773" y="650" font-size="19.5" fill="#44454a" font-weight="normal">114,211.70</text><text x="196.7 210.7 215.7 229.7 243.7 256.7 267.7 278.7 289.7 300.7 311.7 317.7 328.7 339.7 350.7 361.7 372.7" y="679" font-size="19.5" fill="#44454a" font-weight="normal">DIRNA01211-000086</text><text x="1169 1180 1185 1196 1207 1218 1223 1234" y="679" font-size="19.5" fill="#44454a" font-weight="normal">4,450.00</text><text x="1510 1521 1532 1543 1548 1559 1570 1581 1586 1597" y="679" font-size="19.5" fill="#44454a" font-weight="normal">211,965.30</text><text x="1686 1697 1708 1719 1724 1735 1746 1757 1762 1773" y="679" font-size="19.5" fill="#44454a" font-weight="normal">147,822.80</text><text x="196.7 210.7 215.7 229.7 243.7 256.7 267.7 278.7 289.7 300.7 311.7 317.7 328.7 339.7 350.7 361.7 372.7" y="708" font-size="19.5" fill="#44454a" font-weight="normal">DIRNA01211-000087</text><text x="1169 1180 1185 1196 1207 1218 1223 1234" y="708" font-size="19.5" fill="#44454a" font-weight="normal">4,660.00</text><text x="1510 1521 1532 1543 1548 1559 1570 1581 1586 1597" y="708" font-size="19.5" fill="#44454a" font-weight="normal">223,507.80</text><text x="1686 1697 1708 1719 1724 1735 1746 1757 1762 1773" y="708" font-size="19.5" fill="#44454a" font-weight="normal">154,648.60</text><text x="196.7 208.7 221.7 235.7 241.7 254.7 267.7 278.7 289.7 300.7 311.7 322.7 328.7 339.7 350.7 361.7 372.7 383.7" y="737" font-size="19.5" fill="#44454a" font-weight="normal">FAC-ES01111-000001</text><text x="1207 1218 1223 1234" y="737" font-size="19.5" fill="#44454a" font-weight="normal">1.00</text><text x="1548 1559 1570 1581 1586 1597" y="737" font-size="19.5" fill="#44454a" font-weight="normal">120.00</text><text x="1735 1746 1757 1762 1773" y="737" font-size="19.5" fill="#44454a" font-weight="normal">72.90</text><text x="196.7 208.7 221.7 235.7 241.7 254.7 267.7 278.7 289.7 300.7 311.7 322.7 328.7 339.7 350.7 361.7 372.7 383.7" y="766" font-size="19.5" fill="#44454a" font-weight="normal">FAC-ES01112-000010</text><text x="1207 1218 1223 1234" y="766" font-size="19.5" fill="#44454a" font-weight="normal">0.00</text><text x="1532 1543 1548 1559 1570 1581 1586 1597" y="766" font-size="19.5" fill="#44454a" font-weight="normal">2,400.00</text><text x="1746 1757 1762 1773" y="766" font-size="19.5" fill="#44454a" font-weight="normal">0.00</text><text x="196.7 208.7 221.7 235.7 241.7 254.7 267.7 278.7 289.7 300.7 311.7 322.7 328.7 339.7 350.7 361.7 372.7 383.7" y="795" font-size="19.5" fill="#44454a" font-weight="normal">FAC-ES01112-000011</text><text x="1207 1218 1223 1234" y="795" font-size="19.5" fill="#44454a" font-weight="normal">0.00</text><text x="1548 1559 1570 1581 1586 1597" y="795" font-size="19.5" fill="#44454a" font-weight="normal">230.00</text><text x="1746 1757 1762 1773" y="795" font-size="19.5" fill="#44454a" font-weight="normal">0.00</text><text x="196.7 208.7 221.7 235.7 241.7 254.7 267.7 278.7 289.7 300.7 311.7 322.7 328.7 339.7 350.7 361.7 372.7 383.7" y="824" font-size="19.5" fill="#44454a" font-weight="normal">FAC-ES01112-000012</text><text x="1207 1218 1223 1234" y="824" font-size="19.5" fill="#44454a" font-weight="normal">0.00</text><text x="1548 1559 1570 1581 1586 1597" y="824" font-size="19.5" fill="#44454a" font-weight="normal">720.00</text><text x="1746 1757 1762 1773" y="824" font-size="19.5" fill="#44454a" font-weight="normal">0.00</text><text x="196.7 208.7 221.7 235.7 241.7 254.7 267.7 278.7 289.7 300.7 311.7 322.7 328.7 339.7 350.7 361.7 372.7 383.7" y="853" font-size="19.5" fill="#44454a" font-weight="normal">FAC-ES01112-000013</text><text x="1207 1218 1223 1234" y="853" font-size="19.5" fill="#44454a" font-weight="normal">0.00</text><text x="1521 1532 1543 1548 1559 1570 1581 1586 1597" y="853" font-size="19.5" fill="#44454a" font-weight="normal">25,525.00</text><text x="1746 1757 1762 1773" y="853" font-size="19.5" fill="#44454a" font-weight="normal">0.00</text><text x="196.7 208.7 221.7 235.7 241.7 254.7 267.7 278.7 289.7 300.7 311.7 322.7 328.7 339.7 350.7 361.7 372.7 383.7" y="882" font-size="19.5" fill="#44454a" font-weight="normal">FAC-ES01112-000014</text><text x="1207 1218 1223 1234" y="882" font-size="19.5" fill="#44454a" font-weight="normal">0.00</text><text x="1532 1543 1548 1559 1570 1581 1586 1597" y="882" font-size="19.5" fill="#44454a" font-weight="normal">2,850.00</text><text x="1746 1757 1762 1773" y="882" font-size="19.5" fill="#44454a" font-weight="normal">0.00</text><text x="196.7 208.7 221.7 235.7 241.7 254.7 267.7 278.7 289.7 300.7 311.7 322.7 328.7 339.7 350.7 361.7 372.7 383.7" y="911" font-size="19.5" fill="#44454a" font-weight="normal">FAC-ES01112-000015</text><text x="1207 1218 1223 1234" y="911" font-size="19.5" fill="#44454a" font-weight="normal">0.00</text><text x="1548 1559 1570 1581 1586 1597" y="911" font-size="19.5" fill="#44454a" font-weight="normal">700.00</text><text x="1746 1757 1762 1773" y="911" font-size="19.5" fill="#44454a" font-weight="normal">0.00</text><path d="M179 455 h9 l-9 9 z" fill="#008000"/></svg><svg width="1909" height="966"><rect x="1886" y="253" width="23" height="648" fill="#dadada"/><rect x="1886.5" y="253.5" width="23" height="24" fill="#fff" stroke="#a8a8a8"/><path d="M1893 268.3 h11 l-5.5 -5.8 z" fill="#777"/><rect x="1886.5" y="278.5" width="23" height="40" fill="#fff" stroke="#a8a8a8"/><rect x="1886.5" y="877.5" width="23" height="24" fill="#fff" stroke="#a8a8a8"/><path d="M1892 887 h11 l-5.5 6 z" fill="#777"/><rect x="0" y="900" width="1884" height="1" fill="#a6a6a6"/><rect x="1883" y="280" width="1" height="621" fill="#a6a6a6"/><rect x="0" y="901" width="1909" height="33" fill="#e6e6e6"/><rect x="0" y="934" width="1909" height="1" fill="#d0d0d0"/><rect x="112" y="900" width="217" height="31" fill="#fff"/><rect x="112" y="900" width="1" height="31" fill="#a6a6a6"/><rect x="328" y="900" width="1" height="31" fill="#a6a6a6"/><rect x="112" y="928.3" width="217" height="2.6" fill="#217346"/><text x="124.2" y="922" font-size="19.5" fill="#217346" font-weight="bold" textLength="193.8" lengthAdjust="spacingAndGlyphs" >Invoice by Customer</text><path d="M30 911.5 v10 l-8 -5 z" fill="#c0c0c0"/><path d="M57.5 911.5 v10 l7.5 -5 z" fill="#c0c0c0"/><circle cx="379" cy="916.7" r="10.5" fill="none" stroke="#7a7a7a" stroke-width="1.4"/><path d="M373 916.7 h12 M379 910.7 v12" stroke="#7a7a7a" stroke-width="1.4"/><rect x="1142" y="909" width="3" height="3" fill="#a6a6a6"/><rect x="1142" y="915" width="3" height="3" fill="#a6a6a6"/><rect x="1142" y="921" width="3" height="3" fill="#a6a6a6"/><rect x="1162.5" y="904.5" width="698" height="24" fill="#dadada" stroke="#c6c6c6"/><rect x="1187" y="905" width="605" height="23" fill="#fff"/><rect x="1187" y="905" width="1" height="23" fill="#c6c6c6"/><rect x="1162.5" y="904.5" width="24" height="24" fill="#fff" stroke="#c6c6c6"/><path d="M1178 910.5 v11 l-6 -5.5 z" fill="#777"/><rect x="1860.5" y="904.5" width="24" height="24" fill="#fff" stroke="#c6c6c6"/><path d="M1870 910.5 v11 l6 -5.5 z" fill="#777"/><rect x="178" y="280" width="414" height="29.7" fill="none" stroke="#217346" stroke-width="2"/><rect x="587" y="305" width="8" height="8" fill="#fff"/><rect x="588" y="306" width="6" height="6" fill="#217346"/><rect x="0" y="935" width="1909" height="31" fill="#f3f2f1"/><rect x="1469" y="935" width="60" height="31" fill="#c8c6c4"/><path d="M1489 941 h19 v19 h-19 z M1489 947.3 h19 M1489 953.6 h19 M1495.3 941 v19 M1501.6 941 v19" fill="none" stroke="#333" stroke-width="1.6"/><rect x="1549" y="941" width="20" height="19" fill="none" stroke="#444" stroke-width="1.6"/><rect x="1553" y="945" width="12" height="11" fill="none" stroke="#444" stroke-width="1.3"/><path d="M1555.5 948 h7 M1555.5 950.5 h7 M1555.5 953 h7" stroke="#444" stroke-width="1.1"/><path d="M1609 941 h20 v19 h-20 z M1609 952 h12 v-11 M1615 941 v11" fill="none" stroke="#444" stroke-width="1.6"/><path d="M1657 950.8 h11.5" stroke="#444" stroke-width="1.3"/><rect x="1677" y="950" width="148" height="2" fill="#a6a6a6"/><rect x="1747" y="942" width="8" height="17" fill="#767676"/><path d="M1833 950.8 h12 M1839 945 v11.5" stroke="#444" stroke-width="1.3"/><text x="1863.6" y="956.7" font-size="15" fill="#444" font-weight="normal" textLength="39.8" lengthAdjust="spacingAndGlyphs" >100%</text></svg></body></html>
